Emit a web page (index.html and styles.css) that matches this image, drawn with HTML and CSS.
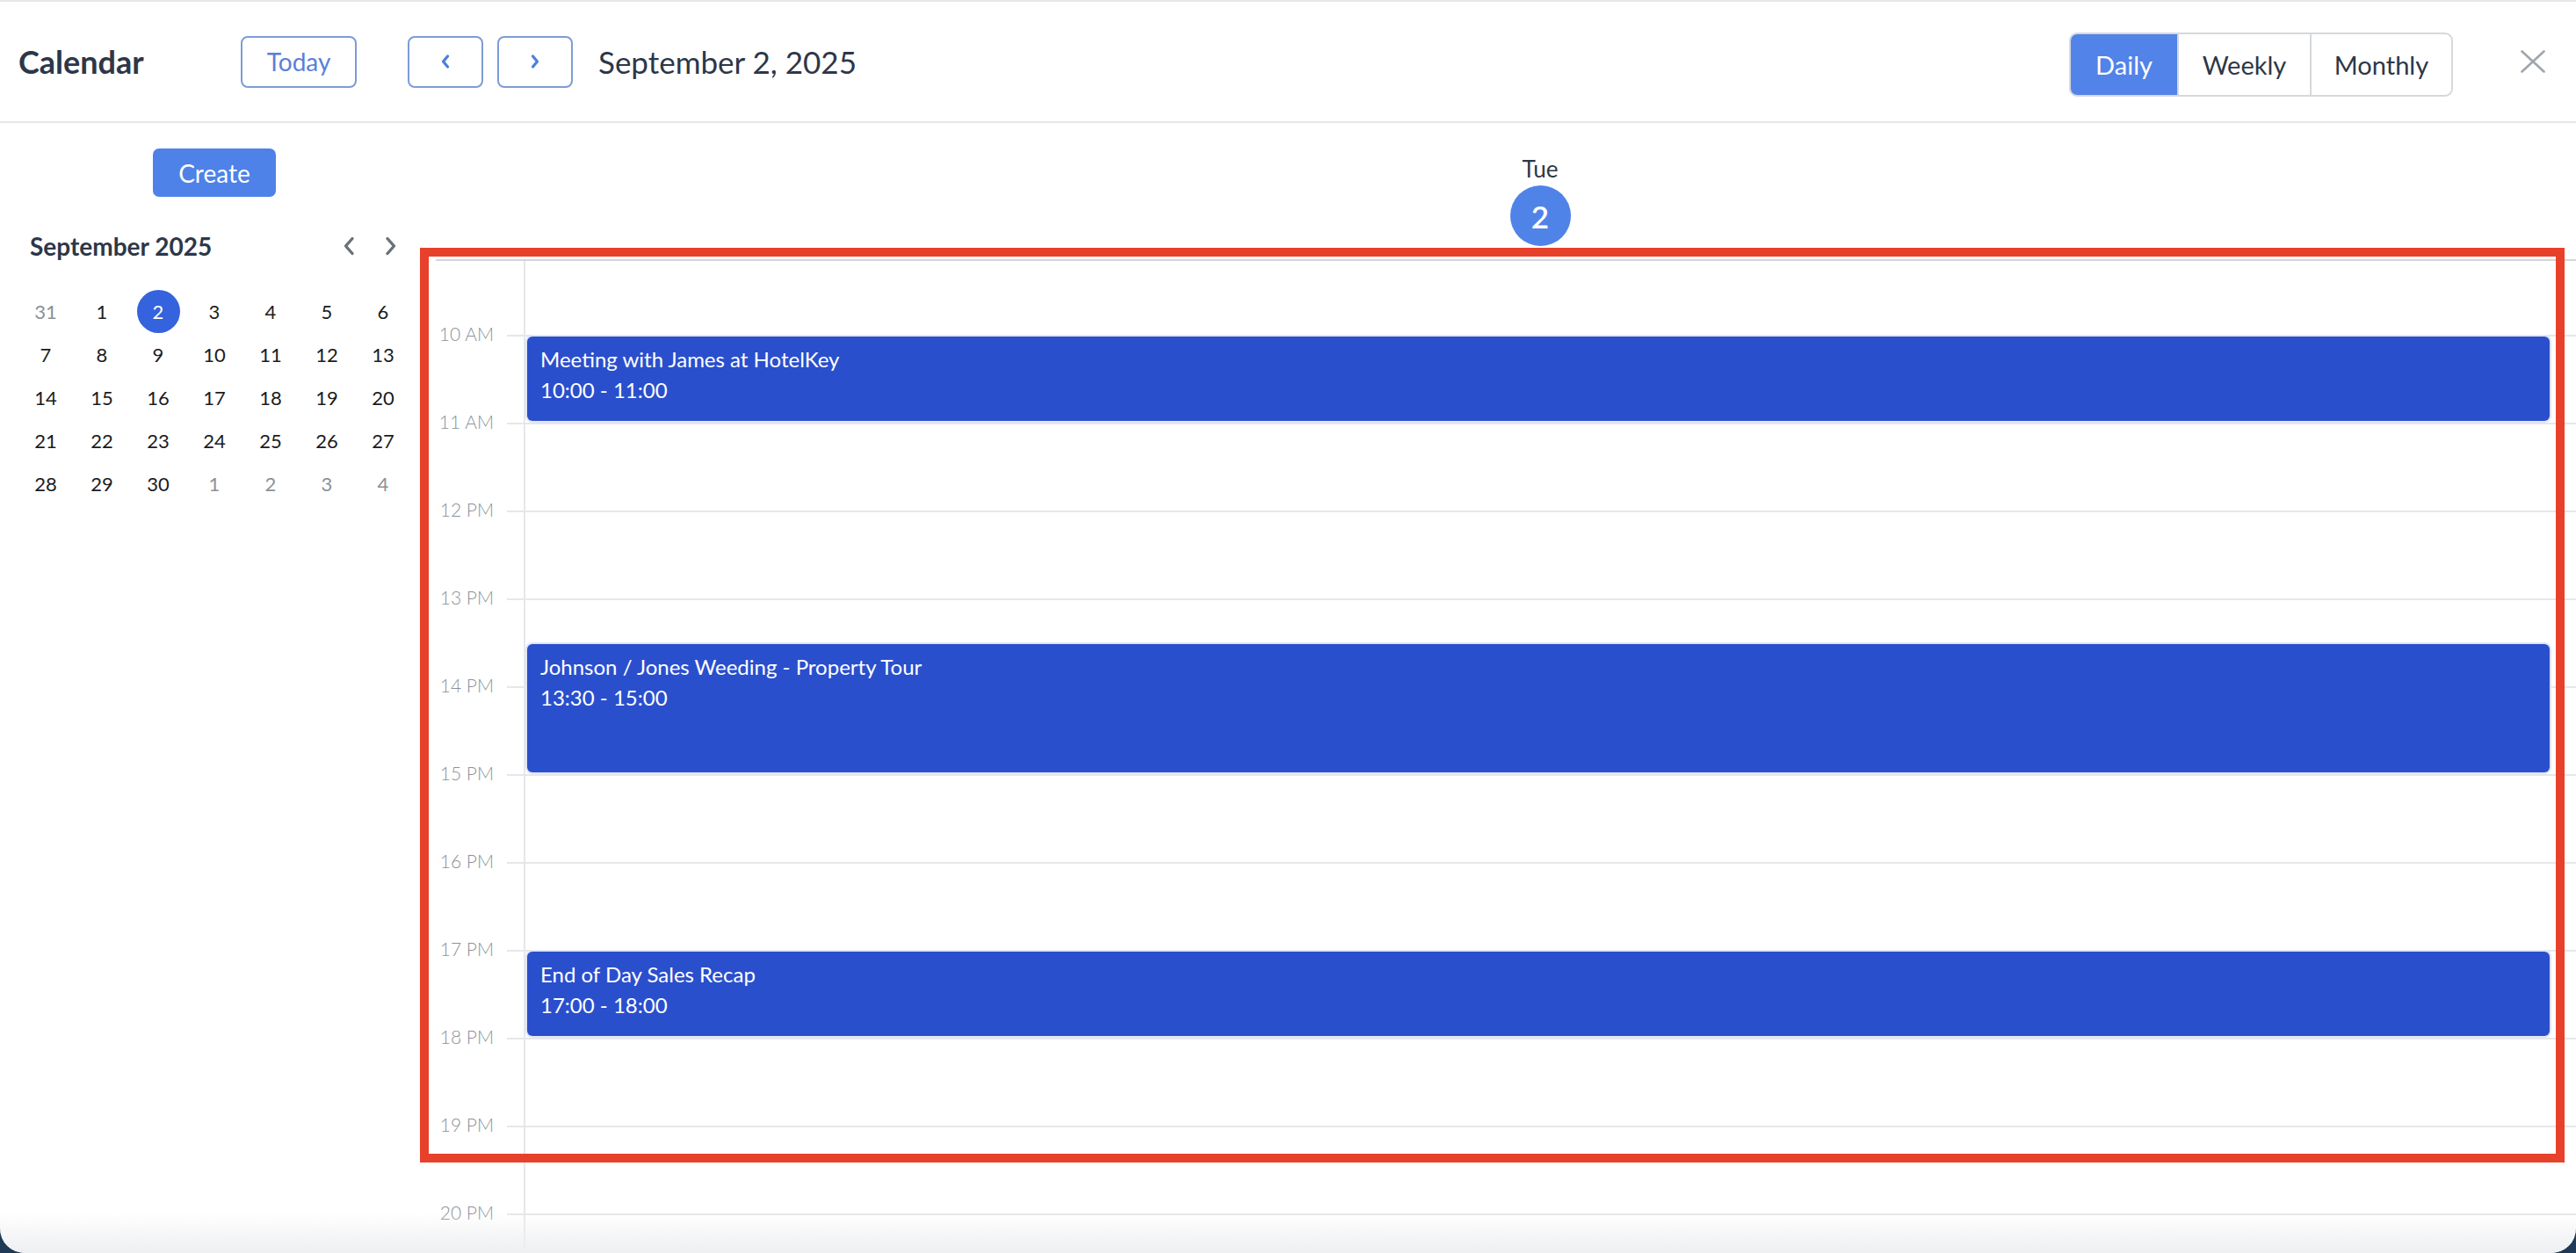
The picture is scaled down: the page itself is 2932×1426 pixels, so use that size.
FILE: index.html
```html
<!DOCTYPE html>
<html lang="en">
<head>
    <meta charset="UTF-8">
    <meta name="viewport" content="width=device-width, initial-scale=1.0">
    <title>Calendar</title>
    <link rel="stylesheet" href="styles.css">
</head>
<body>
    <div class="modal">
        <header class="topbar">
            <h1 class="title">Calendar</h1>
            <button class="btn-outline today">Today</button>
            <div class="nav-btns">
                <button class="btn-outline nav">
                    <svg width="12" height="18" viewBox="0 0 12 18"><path d="M8.5 3 L3.5 9 L8.5 15" fill="none" stroke="#4f7fdc" stroke-width="3.2" stroke-linecap="round" stroke-linejoin="round"/></svg>
                </button>
                <button class="btn-outline nav">
                    <svg width="12" height="18" viewBox="0 0 12 18"><path d="M3.5 3 L8.5 9 L3.5 15" fill="none" stroke="#4f7fdc" stroke-width="3.2" stroke-linecap="round" stroke-linejoin="round"/></svg>
                </button>
            </div>
            <div class="current-date">September 2, 2025</div>
            <div class="view-switch">
                <button class="view active daily">Daily</button>
                <button class="view weekly">Weekly</button>
                <button class="view monthly">Monthly</button>
            </div>
            <button class="close">
                <svg width="28" height="26" viewBox="0 0 28 26"><path d="M1.5 1.5 L26.5 24.5 M26.5 1.5 L1.5 24.5" stroke="#a0a5ad" stroke-width="2.6" stroke-linecap="round"/></svg>
            </button>
        </header>

        <div class="content">
            <aside class="sidebar">
                <button class="create">Create</button>
                <div class="mini-head">
                    <span class="mini-title">September 2025</span>
                    <div class="mini-nav">
                        <button class="mini-arrow">
                            <svg width="16" height="24" viewBox="0 0 16 24"><path d="M12 3.5 L4.5 12 L12 20.5" fill="none" stroke="#6b7079" stroke-width="3.4" stroke-linecap="round" stroke-linejoin="round"/></svg>
                        </button>
                        <button class="mini-arrow">
                            <svg width="16" height="24" viewBox="0 0 16 24"><path d="M4 3.5 L11.5 12 L4 20.5" fill="none" stroke="#6b7079" stroke-width="3.4" stroke-linecap="round" stroke-linejoin="round"/></svg>
                        </button>
                    </div>
                </div>
                <div class="mini-grid">
                    <span class="muted">31</span><span>1</span><span><b class="selected">2</b></span><span>3</span><span>4</span><span>5</span><span>6</span>
                    <span>7</span><span>8</span><span>9</span><span>10</span><span>11</span><span>12</span><span>13</span>
                    <span>14</span><span>15</span><span>16</span><span>17</span><span>18</span><span>19</span><span>20</span>
                    <span>21</span><span>22</span><span>23</span><span>24</span><span>25</span><span>26</span><span>27</span>
                    <span>28</span><span>29</span><span>30</span><span class="muted">1</span><span class="muted">2</span><span class="muted">3</span><span class="muted">4</span>
                </div>
            </aside>

            <main class="day-view">
                <div class="day-head">
                    <div class="day-name">Tue</div>
                    <div class="day-num">2</div>
                </div>
                <div class="day-grid">
                    <div class="hours">
                        <div class="hour-row"><span class="hour-label">10 AM</span><div class="hour-line"></div></div>
                        <div class="hour-row"><span class="hour-label">11 AM</span><div class="hour-line"></div></div>
                        <div class="hour-row"><span class="hour-label">12 PM</span><div class="hour-line"></div></div>
                        <div class="hour-row"><span class="hour-label">13 PM</span><div class="hour-line"></div></div>
                        <div class="hour-row"><span class="hour-label">14 PM</span><div class="hour-line"></div></div>
                        <div class="hour-row"><span class="hour-label">15 PM</span><div class="hour-line"></div></div>
                        <div class="hour-row"><span class="hour-label">16 PM</span><div class="hour-line"></div></div>
                        <div class="hour-row"><span class="hour-label">17 PM</span><div class="hour-line"></div></div>
                        <div class="hour-row"><span class="hour-label">18 PM</span><div class="hour-line"></div></div>
                        <div class="hour-row"><span class="hour-label">19 PM</span><div class="hour-line"></div></div>
                        <div class="hour-row"><span class="hour-label">20 PM</span><div class="hour-line"></div></div>
                    </div>
                    <div class="day-col">
                        <div class="event" style="top: 86px; height: 96px;">
                            <div class="event-title">Meeting with James at HotelKey</div>
                            <div class="event-time">10:00 - 11:00</div>
                        </div>
                        <div class="event" style="top: 436px; height: 146px;">
                            <div class="event-title">Johnson / Jones Weeding - Property Tour</div>
                            <div class="event-time">13:30 - 15:00</div>
                        </div>
                        <div class="event" style="top: 786px; height: 96px;">
                            <div class="event-title">End of Day Sales Recap</div>
                            <div class="event-time">17:00 - 18:00</div>
                        </div>
                    </div>
                </div>
            </main>
        </div>

        <div class="highlight"></div>
    </div>
</body>
</html>
```

FILE: styles.css
```css
* {
    box-sizing: border-box;
}
body {
    margin: 0;
    background-color: #1e3a56;
    font-family: Lato, "Open Sans", Arial, sans-serif;
    color: #2d3748;
}
button {
    font-family: inherit;
    cursor: pointer;
    background: none;
    border: none;
    padding: 0;
}
.modal {
    position: relative;
    height: 100vh;
    background: #ffffff;
    border-radius: 0 0 28px 28px;
    overflow: hidden;
    display: flex;
    flex-direction: column;
}
.modal::after {
    content: "";
    position: absolute;
    left: 0;
    right: 0;
    bottom: 0;
    height: 46px;
    background: linear-gradient(rgba(240, 241, 243, 0), #eeeff1);
    pointer-events: none;
}

/* top bar */
.topbar {
    display: flex;
    align-items: center;
    height: 140px;
    flex-shrink: 0;
    padding: 0 35px 0 21px;
    border-top: 2px solid #e5e7eb;
    border-bottom: 2px solid #e5e7eb;
}
.title {
    width: 253px;
    margin: 0;
    font-size: 36px;
    font-weight: 700;
    color: #2d3748;
}
.btn-outline {
    height: 59px;
    border: 2px solid #7d9cd6;
    border-radius: 8px;
    background: #ffffff;
    display: flex;
    align-items: center;
    justify-content: center;
}
.today {
    width: 132px;
    margin-right: 58px;
    font-size: 28px;
    color: #5a80d8;
}
.nav-btns {
    display: flex;
    gap: 16px;
}
.nav {
    width: 86px;
}
.current-date {
    margin-left: 29px;
    font-size: 35px;
    color: #2d3748;
}
.view-switch {
    margin-left: auto;
    margin-top: 6px;
    display: flex;
    height: 73px;
    border: 2px solid #d5d8dd;
    border-radius: 9px;
    overflow: hidden;
}
.view {
    font-size: 29px;
    color: #2d3748;
    border-left: 2px solid #d5d8dd;
}
.view.daily {
    width: 121px;
    border-left: none;
}
.view.weekly {
    width: 151px;
}
.view.monthly {
    width: 161px;
}
.view.active {
    background-color: #5183e9;
    color: #ffffff;
}
.close {
    margin-left: 77px;
    width: 28px;
    height: 26px;
    display: flex;
}

/* body */
.content {
    flex: 1;
    display: flex;
    min-height: 0;
}
.sidebar {
    width: 496px;
    flex-shrink: 0;
    padding: 29px 28px 0 20px;
    display: flex;
    flex-direction: column;
}
.create {
    align-self: center;
    width: 140px;
    height: 55px;
    border-radius: 7px;
    background-color: #4f82e8;
    color: #ffffff;
    font-size: 28px;
}
.mini-head {
    margin-top: 36px;
    height: 40px;
    display: flex;
    align-items: center;
    justify-content: space-between;
    padding: 0 7px 0 14px;
}
.mini-title {
    font-size: 28px;
    font-weight: 700;
    color: #2d3748;
}
.mini-nav {
    display: flex;
    gap: 16px;
}
.mini-arrow {
    width: 32px;
    height: 32px;
    display: flex;
    align-items: center;
    justify-content: center;
}
.mini-grid {
    margin-top: 30px;
    display: grid;
    grid-template-columns: repeat(7, 64px);
    grid-auto-rows: 49px;
}
.mini-grid span {
    display: flex;
    align-items: center;
    justify-content: center;
    font-size: 22px;
    color: #1c1c1e;
}
.mini-grid span.muted {
    color: #8b9098;
}
.mini-grid .selected {
    width: 49px;
    height: 49px;
    border-radius: 50%;
    background-color: #3562dd;
    color: #ffffff;
    font-weight: 400;
    display: flex;
    align-items: center;
    justify-content: center;
}

/* day view */
.day-view {
    flex: 1;
    display: flex;
    flex-direction: column;
    min-width: 0;
}
.day-head {
    height: 155px;
    flex-shrink: 0;
    margin: 0 22px 0 100px;
    padding-top: 36px;
    display: flex;
    flex-direction: column;
    align-items: center;
}
.day-name {
    font-size: 26px;
    line-height: 32px;
    color: #2d3748;
}
.day-num {
    margin-top: 3px;
    width: 69px;
    height: 69px;
    border-radius: 50%;
    background-color: #5083e8;
    color: #ffffff;
    font-size: 35px;
    font-weight: 600;
    display: flex;
    align-items: center;
    justify-content: center;
}
.day-grid {
    position: relative;
    flex: 1;
    overflow: hidden;
    border-top: 2px solid #d3d6db;
}
.hours {
    padding-top: 84px;
}
.hour-row {
    height: 100px;
    display: flex;
}
.hour-label {
    width: 66px;
    margin-top: -13px;
    height: 24px;
    line-height: 24px;
    text-align: right;
    font-size: 21px;
    font-weight: 300;
    color: #8c9199;
}
.hour-line {
    flex: 1;
    margin-left: 15px;
    border-top: 2px solid #e6e7e9;
}
.day-col {
    position: absolute;
    top: 0;
    bottom: 0;
    left: 100px;
    right: 0;
    border-left: 2px solid #e6e7e9;
}
.event {
    position: absolute;
    left: 2px;
    right: 30px;
    padding: 8px 15px 0;
    background-color: #2a4fcd;
    border-radius: 6px;
    box-shadow: 0 0 0 2px #e1e6f6;
    color: #ffffff;
    font-size: 24px;
    line-height: 35px;
}

/* annotation frame */
.highlight {
    position: absolute;
    left: 478px;
    top: 282px;
    width: 2441px;
    height: 1041px;
    border: 10px solid #e8412b;
    pointer-events: none;
}
```
